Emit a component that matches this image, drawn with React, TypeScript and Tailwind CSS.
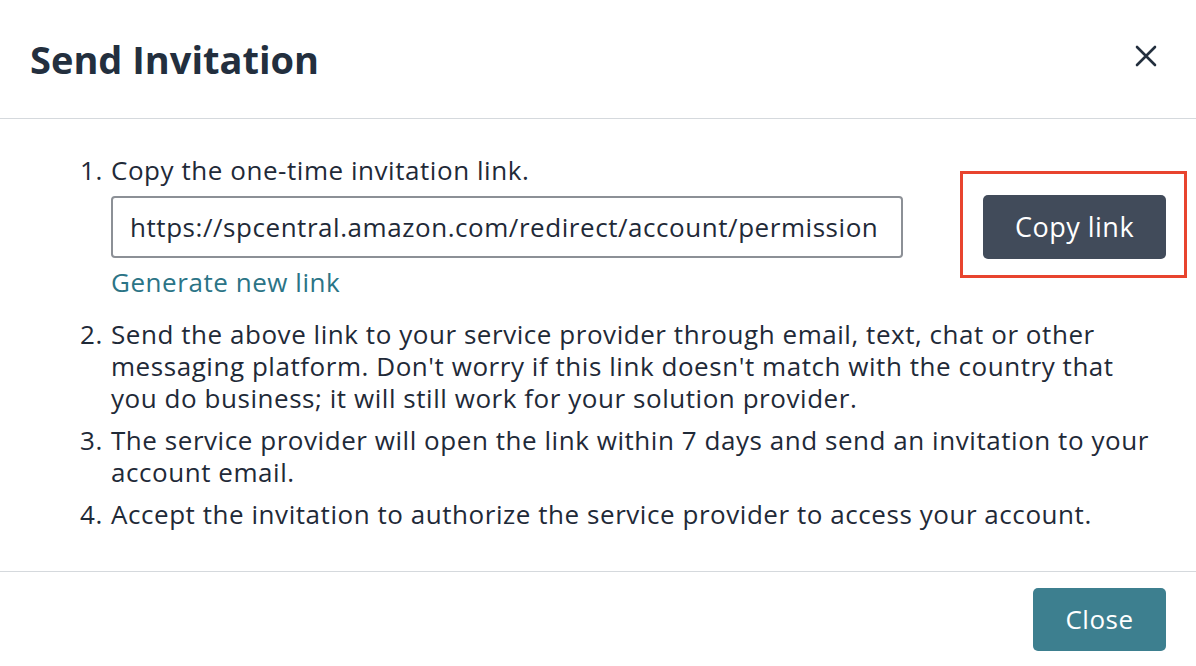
import React from "react";

export default function App() {
  const font = { fontFamily: '"Open Sans", "Noto Sans", sans-serif' };
  return (
    <div className="w-[1196px] h-[666px] bg-white flex flex-col text-[#1f2a38]" style={font}>
      <div className="h-[119px] border-b border-[#d5d9dd] flex items-start justify-between pl-[30px] pr-[39px] pt-[33px]">
        <h1 className="text-[38px] leading-[52px] font-bold text-[#232f3e]">Send Invitation</h1>
        <button className="mt-[12px] w-[22px] h-[22px] text-[#232f3e]" aria-label="Close">
          <svg viewBox="0 0 22 22" width="22" height="22" fill="none" stroke="currentColor" strokeWidth="2.6" strokeLinecap="round">
            <path d="M2 2 L20 20 M20 2 L2 20" />
          </svg>
        </button>
      </div>
      <div className="flex-1 pt-[35px] pl-[80px] pr-[30px]">
        <ol className="flex flex-col gap-[10px] text-[26px] leading-[32px] tracking-[0.55px]">
          <li className="flex">
            <span className="w-[31px] shrink-0">1.</span>
            <div className="flex-1">
              <div>Copy the one-time invitation link.</div>
              <div className="flex items-center justify-between mt-[9px]">
                <input
                  readOnly
                  value="https://spcentral.amazon.com/redirect/account/permission"
                  className="w-[792px] h-[62px] border-2 border-[#8c9096] rounded-[4px] pl-[17px] pr-[18px] text-[26px] tracking-[0.55px] text-[#1f2a38] outline-none"
                  style={font}
                />
                <div className="relative">
                  <button className="w-[183px] h-[64px] rounded-[5px] bg-[#414b5a] text-white text-[27px] tracking-[0.5px]">
                    Copy link
                  </button>
                  <span className="absolute -top-[24px] -left-[23px] -right-[21px] -bottom-[19px] border-[3px] border-[#e8442e] pointer-events-none" />
                </div>
              </div>
              <div className="mt-[7px] mb-[10px] text-[#2b7486]">Generate new link</div>
            </div>
          </li>
          <li className="flex">
            <span className="w-[31px] shrink-0">2.</span>
            <div className="flex-1 pr-[12px]">
              Send the above link to your service provider through email, text, chat or other messaging platform. Don't worry if this link doesn't match with the country that you do business; it will still work for your solution provider.
            </div>
          </li>
          <li className="flex">
            <span className="w-[31px] shrink-0">3.</span>
            <div className="flex-1 pr-[12px]">
              The service provider will open the link within 7 days and send an invitation to your account email.
            </div>
          </li>
          <li className="flex">
            <span className="w-[31px] shrink-0">4.</span>
            <div className="flex-1 pr-[12px]">Accept the invitation to authorize the service provider to access your account.</div>
          </li>
        </ol>
      </div>
      <div className="h-[95px] border-t border-[#d5d9dd] flex items-start justify-end pr-[30px] pt-[16px]">
        <button className="w-[133px] h-[63px] rounded-[5px] bg-[#3d7f8f] text-white text-[26px] tracking-[0.5px]">Close</button>
      </div>
    </div>
  );
}
